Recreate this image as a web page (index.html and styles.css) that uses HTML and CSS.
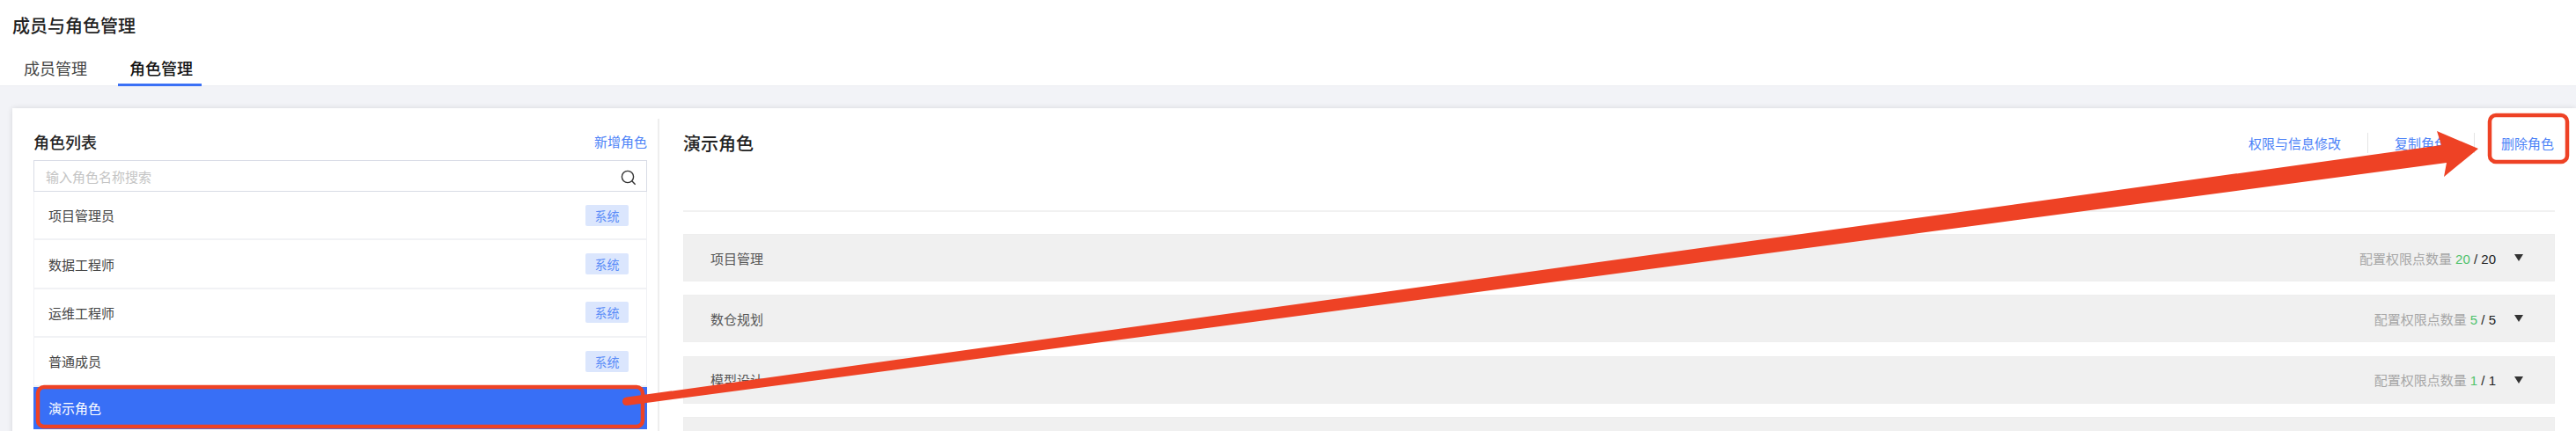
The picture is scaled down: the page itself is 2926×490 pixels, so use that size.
FILE: index.html
```html
<!DOCTYPE html>
<html lang="en">
<head>
  <meta charset="UTF-8">
  <title>成员与角色管理</title>
  <link rel="stylesheet" href="styles.css">
</head>
<body>
  <div class="page">
    <div class="header">
      <h1 class="page-title">成员与角色管理</h1>
      <div class="tabs">
        <div class="tab">成员管理</div>
        <div class="tab active">角色管理</div>
      </div>
    </div>

    <div class="content">
      <div class="card">
        <div class="role-panel">
          <div class="role-panel-head">
            <h2 class="role-panel-title">角色列表</h2>
            <a class="link add-link">新增角色</a>
          </div>
          <div class="search-box">
            <input class="search-input" type="text" placeholder="输入角色名称搜索">
            <svg class="search-icon" width="18" height="18" viewBox="0 0 18 18">
              <circle cx="8" cy="8" r="6.6" fill="none" stroke="#333" stroke-width="1.4"/>
              <path d="M12.8 12.8 L16.6 16.8" fill="none" stroke="#333" stroke-width="1.4"/>
            </svg>
          </div>
          <div class="role-list">
            <div class="role-item"><span>项目管理员</span><span class="badge">系统</span></div>
            <div class="role-item"><span>数据工程师</span><span class="badge">系统</span></div>
            <div class="role-item"><span>运维工程师</span><span class="badge">系统</span></div>
            <div class="role-item"><span>普通成员</span><span class="badge">系统</span></div>
            <div class="role-item selected"><span>演示角色</span></div>
          </div>
        </div>

        <div class="detail-panel">
          <div class="detail-head">
            <h2 class="detail-title">演示角色</h2>
            <div class="actions">
              <a class="link action">权限与信息修改</a>
              <a class="link action">复制角色</a>
              <a class="link action">删除角色</a>
            </div>
          </div>
          <div class="perm-list">
            <div class="perm-row">
              <span class="perm-name">项目管理</span>
              <span class="perm-count">配置权限点数量 <em>20</em> <b>/ 20</b></span>
              <i class="caret"></i>
            </div>
            <div class="perm-row">
              <span class="perm-name">数仓规划</span>
              <span class="perm-count">配置权限点数量 <em>5</em> <b>/ 5</b></span>
              <i class="caret"></i>
            </div>
            <div class="perm-row">
              <span class="perm-name">模型设计</span>
              <span class="perm-count">配置权限点数量 <em>1</em> <b>/ 1</b></span>
              <i class="caret"></i>
            </div>
            <div class="perm-row"></div>
          </div>
        </div>
      </div>
    </div>

    <!-- red annotation drawn on top of the screenshot -->
    <svg class="annotation" width="2926" height="490" viewBox="0 0 2926 490">
      <rect x="43" y="440" width="687" height="45" rx="7" fill="none" stroke="#ee4225" stroke-width="4.500"/>
      <rect x="2828" y="131" width="88" height="53" rx="7" fill="none" stroke="#ee4225" stroke-width="4.500"/>
      <path d="M712 451.600 L2773 165 L2768 149 L2815 169 L2776 201 L2779 185 L712 461 Q707 461 707 456.300 Q707 452.300 712 451.600 Z" fill="#ee4225"/>
    </svg>
  </div>
</body>
</html>
```

FILE: styles.css
```css
* {
  box-sizing: border-box;
}

body {
  margin: 0;
  background: #f2f3f7;
  font-family: "Noto Sans CJK SC", "Liberation Sans", sans-serif;
  color: #333;
  overflow: hidden;
}

.page {
  position: relative;
  height: 490px;
  overflow: hidden;
}

.header {
  height: 98px;
  background: #fff;
  border-bottom: 1px solid #eceef2;
  padding: 0 14px;
}

.page-title {
  margin: 0;
  padding-top: 15px;
  font-size: 20px;
  line-height: 28px;
  font-weight: 500;
  color: #222;
}

.tabs {
  display: flex;
  margin-top: 21px;
}

.tab {
  width: 120px;
  height: 34px;
  padding-left: 13px;
  font-size: 18px;
  line-height: 26px;
  color: #444;
}

.tab.active {
  width: 95px;
  padding-left: 13px;
  font-weight: 500;
  color: #111;
  border-bottom: 3px solid #3a70f5;
}

.content {
  padding: 25px 0 0 14px;
}

.card {
  display: flex;
  height: 400px;
  background: #fff;
  box-shadow: 0 0 6px rgba(0,0,0,0.12);
}

.role-panel {
  width: 735px;
  margin-top: 12px;
  padding: 0 12px 0 24px;
  border-right: 2px solid #eeeeee;
}

.role-panel-head {
  display: flex;
  justify-content: space-between;
  align-items: center;
  height: 47px;
  padding-top: 4px;
}

.role-panel-title {
  margin: 0;
  font-size: 18px;
  font-weight: 500;
  color: #222;
}

.link {
  color: #4c82f7;
  font-size: 15px;
}

.search-box {
  position: relative;
  height: 36px;
  border: 1px solid #d9dce6;
}

.search-input {
  width: 100%;
  height: 100%;
  padding: 0 13px;
  border: none;
  outline: none;
  font-family: inherit;
  font-size: 15px;
}

.search-input::placeholder {
  color: #c4c4c4;
}

.search-icon {
  position: absolute;
  top: 10px;
  right: 11px;
}

.role-list {
  border-left: 1px solid #f0f1f4;
  border-right: 1px solid #f0f1f4;
}

.role-item {
  display: flex;
  justify-content: space-between;
  align-items: center;
  height: 55.4px;
  padding: 0 20px 0 16px;
  border-bottom: 2px solid #f1f2f5;
  font-size: 15px;
  color: #444;
}

.badge {
  width: 49px;
  height: 24px;
  background: #dbe6fd;
  border-radius: 2px;
  color: #5a8cf8;
  font-size: 14px;
  line-height: 24px;
  text-align: center;
}

.role-item.selected {
  height: 48px;
  margin: 0 -1px;
  padding-left: 17px;
  border-bottom: none;
  background: #386ff6;
  color: #fff;
}

.detail-panel {
  flex: 1;
  min-width: 0;
  padding: 0 24px 0 27px;
}

.detail-head {
  display: flex;
  justify-content: space-between;
  align-items: center;
  height: 118px;
  padding-bottom: 37px;
  border-bottom: 2px solid #f1f1f1;
}

.detail-title {
  margin: 0;
  font-size: 20px;
  font-weight: 500;
  color: #222;
}

.actions {
  display: flex;
}

.action {
  padding: 0 30px;
  height: 23px;
  line-height: 23px;
  border-right: 1px solid #e4e4e4;
}

.action:last-child {
  padding-right: 1px;
  border-right: none;
}

.perm-list {
  display: flex;
  flex-direction: column;
  gap: 15.3px;
  margin-top: 25px;
}

.perm-row {
  display: flex;
  align-items: center;
  flex: none;
  height: 54px;
  padding: 0 35px 0 30px;
  background: #f0f0f0;
  border: 1px solid #eeeeee;
  font-size: 15px;
}

.perm-name {
  flex: 1;
  color: #555;
}

.perm-count {
  font-family: "Liberation Sans", "Noto Sans CJK SC", sans-serif;
  color: #a6a6a6;
}

.perm-count em {
  font-style: normal;
  color: #4fc26b;
}

.perm-count b {
  font-weight: 400;
  color: #222;
}

.caret {
  width: 0;
  height: 0;
  margin-left: 21px;
  border-left: 5px solid transparent;
  border-right: 5px solid transparent;
  border-top: 8px solid #333;
}

.annotation {
  position: absolute;
  top: 0;
  left: 0;
}
```
